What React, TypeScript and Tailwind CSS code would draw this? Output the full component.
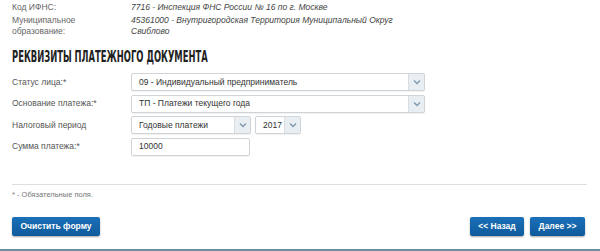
import React from 'react';

const font = { fontFamily: '"Liberation Sans", Arial, sans-serif' };

function Chevron() {
  return (
    <svg width="8" height="6" viewBox="0 0 8 6" fill="none">
      <path d="M1 1.5 L4 4.5 L7 1.5" stroke="#7e9bb3" strokeWidth="1.4" />
    </svg>
  );
}

function Select({ value, width }: { value: string; width: string }) {
  return (
    <div
      className={`${width} h-[18px] flex items-stretch border border-[#cfd4d8] rounded-[2px] bg-white shadow-[0_1px_1px_rgba(0,0,0,0.06)]`}
    >
      <div className="flex-1 flex items-center pl-[7px] text-[8.5px] text-[#333] truncate">{value}</div>
      <div className="w-[16px] flex items-center justify-center bg-[#e9eef2] border-l border-[#d8dde1]">
        <Chevron />
      </div>
    </div>
  );
}

function Row({ label, children }: { label: string; children: React.ReactNode }) {
  return (
    <div className="flex items-center h-[18px]">
      <div className="w-[119px] text-[8.5px] text-[#555]">{label}</div>
      {children}
    </div>
  );
}

function Button({ children, width }: { children: React.ReactNode; width: string }) {
  return (
    <div
      className={`${width} h-[19px] flex items-center justify-center rounded-[2px] bg-gradient-to-b from-[#1a70b8] to-[#0f5a9c] text-white text-[8.5px] font-bold shadow-[0_1px_2px_rgba(0,0,0,0.35)]`}
    >
      {children}
    </div>
  );
}

export default function App() {
  return (
    <div className="w-[600px] h-[251px] bg-white overflow-hidden flex flex-col" style={font}>
      <div className="px-3 flex-1 flex flex-col">
        {/* Info */}
        <div className="pt-[2px] grid grid-cols-[119px_1fr] gap-y-[2px] text-[8.5px] leading-[11px]">
          <div className="text-[#666]">Код ИФНС:</div>
          <div className="italic text-[#444]">7716 - Инспекция ФНС России № 16 по г. Москве</div>
          <div className="text-[#666]">
            Муниципальное
            <br />
            образование:
          </div>
          <div className="italic text-[#444] w-[266px]">
            45361000 - Внутригородская Территория Муниципальный Округ Свиблово
          </div>
        </div>

        {/* Heading */}
        <div className="mt-[11px] h-[18px] leading-[18px]">
          <span
            className="inline-block origin-left scale-x-[0.56] text-[15px] font-bold text-[#222] whitespace-nowrap"
            style={{ fontFamily: '"DejaVu Sans", sans-serif' }}
          >
            РЕКВИЗИТЫ ПЛАТЕЖНОГО ДОКУМЕНТА
          </span>
        </div>

        {/* Form */}
        <div className="mt-[7px] flex flex-col gap-[3.5px]">
          <Row label="Статус лица:*">
            <Select value="09 - Индивидуальный предприниматель" width="w-[294px]" />
          </Row>
          <Row label="Основание платежа:*">
            <Select value="ТП - Платежи текущего года" width="w-[294px]" />
          </Row>
          <Row label="Налоговый период">
            <div className="flex gap-[4px]">
              <Select value="Годовые платежи" width="w-[120px]" />
              <Select value="2017" width="w-[46px]" />
            </div>
          </Row>
          <Row label="Сумма платежа:*">
            <div className="w-[119px] h-[18px] flex items-center pl-[7px] border border-[#cfd4d8] rounded-[2px] text-[8.5px] text-[#333] shadow-[0_1px_1px_rgba(0,0,0,0.06)]">
              10000
            </div>
          </Row>
        </div>

        <div className="mt-[28px] h-px bg-[#dcdfe2] mr-[1px]" />

        <div className="mt-[5px] text-[7.5px] leading-[10px] text-[#777]">* - Обязательные поля.</div>

        <div className="mt-[17px] flex items-center">
          <Button width="w-[88px]">Очистить форму</Button>
          <div className="flex-1" />
          <div className="flex gap-[6px] mr-[3px]">
            <Button width="w-[54px]">&lt;&lt; Назад</Button>
            <Button width="w-[55px]">Далее &gt;&gt;</Button>
          </div>
        </div>
      </div>
      <div className="h-[2px] bg-[#6f8d9c]" />
    </div>
  );
}
